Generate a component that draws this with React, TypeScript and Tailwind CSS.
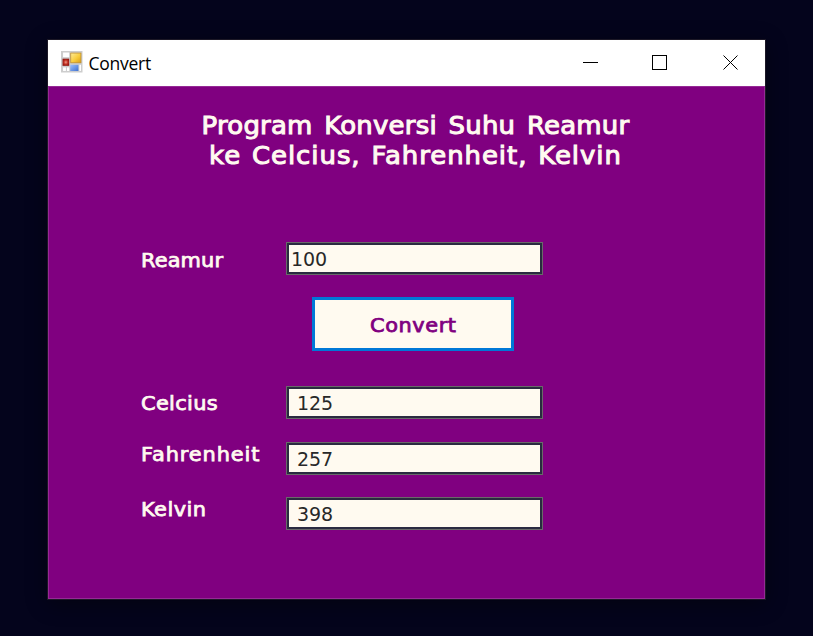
import type { ReactNode } from "react";

function AppIcon() {
  return (
    <svg width="21.500" height="21.500" viewBox="0 0 21 21" className="shrink-0">
      <defs>
        <linearGradient id="gold" x1="0" y1="0" x2="1" y2="1">
          <stop offset="0" stopColor="#ffed9a" />
          <stop offset="0.55" stopColor="#f8cc3c" />
          <stop offset="1" stopColor="#d89c14" />
        </linearGradient>
        <radialGradient id="red">
          <stop offset="0" stopColor="#f09a88" />
          <stop offset="0.6" stopColor="#c23022" />
          <stop offset="1" stopColor="#931a14" />
        </radialGradient>
        <linearGradient id="blue" x1="0" y1="0" x2="1" y2="1">
          <stop offset="0" stopColor="#9cc0ff" />
          <stop offset="1" stopColor="#3d70d0" />
        </linearGradient>
      </defs>
      <rect width="21" height="21" fill="#cdcdcd" />
      <rect x="2" y="1.500" width="6" height="4.500" fill="#fff" />
      <rect x="2" y="16" width="2.800" height="3.500" fill="#fff" />
      <rect x="5.800" y="16" width="2.200" height="3.500" fill="#fff" />
      <rect x="18" y="13.500" width="1.500" height="6" fill="#fff" />
      <rect x="1.5" y="7.5" width="6.5" height="7" fill="url(#red)" />
      <rect x="9.5" y="2" width="10" height="9.500" fill="url(#gold)" stroke="#c09030" strokeWidth="0.8" />
      <rect x="9" y="13.5" width="8" height="6" fill="url(#blue)" />
    </svg>
  );
}

function TitleBar() {
  return (
    <header className="flex h-[46px] shrink-0 bg-white">
      <div className="flex flex-1 items-center gap-[6px] pl-[13px]">
        <div className="-mt-[2px]">
          <AppIcon />
        </div>
        <span className="-mt-px font-['Open_Sans','Noto_Sans',sans-serif] text-[17.5px] leading-6 tracking-[-0.25px] text-black">Convert</span>
      </div>
      <svg width="156" height="46" viewBox="0 0 156 46" className="mr-[26px]" fill="none" stroke="#000" shapeRendering="crispEdges">
        <path d="M0 22.5h15" />
        <rect x="69.5" y="15.5" width="14" height="14" />
        <path d="M140.5 15.5l14 14M154.500 15.5l-14 14" shapeRendering="auto" />
      </svg>
    </header>
  );
}

function Field({ label, value, labelClass, valueClass }: { label: ReactNode; value: string; labelClass: string; valueClass: string }) {
  return (
    <div className="flex h-[33px]">
      <label className={`w-[145px] shrink-0 text-[19px] leading-6 whitespace-nowrap text-[#fffaf0] [-webkit-text-stroke:0.75px_#fffaf0] ${labelClass}`}>
        <span className="inline-block origin-left scale-x-[1.1]">{label}</span>
      </label>
      <div className="w-[257px] border border-[#696969] bg-[#fffaf0]">
        <div className={`h-full border-2 border-[#2a2a40] text-[19px] leading-[29px] tracking-[-0.1px] text-[#282828] ${valueClass}`}>{value}</div>
      </div>
    </div>
  );
}

export default function App() {
  return (
    <div className="flex h-[636px] w-[813px] bg-[#04041c] pt-[40px] pl-[48px] font-['DejaVu_Sans',sans-serif]">
      <div className="flex h-[559px] w-[717px] flex-col shadow-[0_0_0_1px_#1c1826,0_4px_20px_#00000070]">
        <TitleBar />
        <main className="flex-1 border border-[#952a95] bg-[#800080] pt-[24px] pl-[92px]">
          <h1 className="w-[549px] text-center text-[24px] leading-[30px] text-[#fffaf0] [-webkit-text-stroke:1px_#fffaf0]">
            <span className="block scale-x-[1.08] tracking-[0.22px] [word-spacing:3px]">Program Konversi Suhu Reamur</span>
            <span className="block scale-x-[1.08] tracking-[0.9px] [word-spacing:1.5px]">ke Celcius, Fahrenheit, Kelvin</span>
          </h1>
          <div className="mt-[71px]">
            <Field label="Reamur" value="100" labelClass="pt-[6px] tracking-[0.1px]" valueClass="pl-[2px]" />
          </div>
          <button className="mt-[22px] ml-[171px] block h-[54px] w-[202px] border-[3px] border-[#0078d7] bg-[#fffaf0] pt-[2px] text-[19px] leading-6 tracking-[0.5px] text-[#800080] [-webkit-text-stroke:0.75px_#800080]">
            <span className="inline-block scale-x-[1.1]">Convert</span>
          </button>
          <div className="mt-[35px] flex flex-col gap-[22.5px]">
            <Field label="Celcius" value="125" labelClass="pt-[5px] tracking-[0.3px]" valueClass="pl-[8px]" />
            <Field label="Fahrenheit" value="257" labelClass="tracking-[0.8px]" valueClass="pl-[8px]" />
            <Field label="Kelvin" value="398" labelClass="tracking-[0.4px]" valueClass="pl-[8px]" />
          </div>
        </main>
      </div>
    </div>
  );
}
